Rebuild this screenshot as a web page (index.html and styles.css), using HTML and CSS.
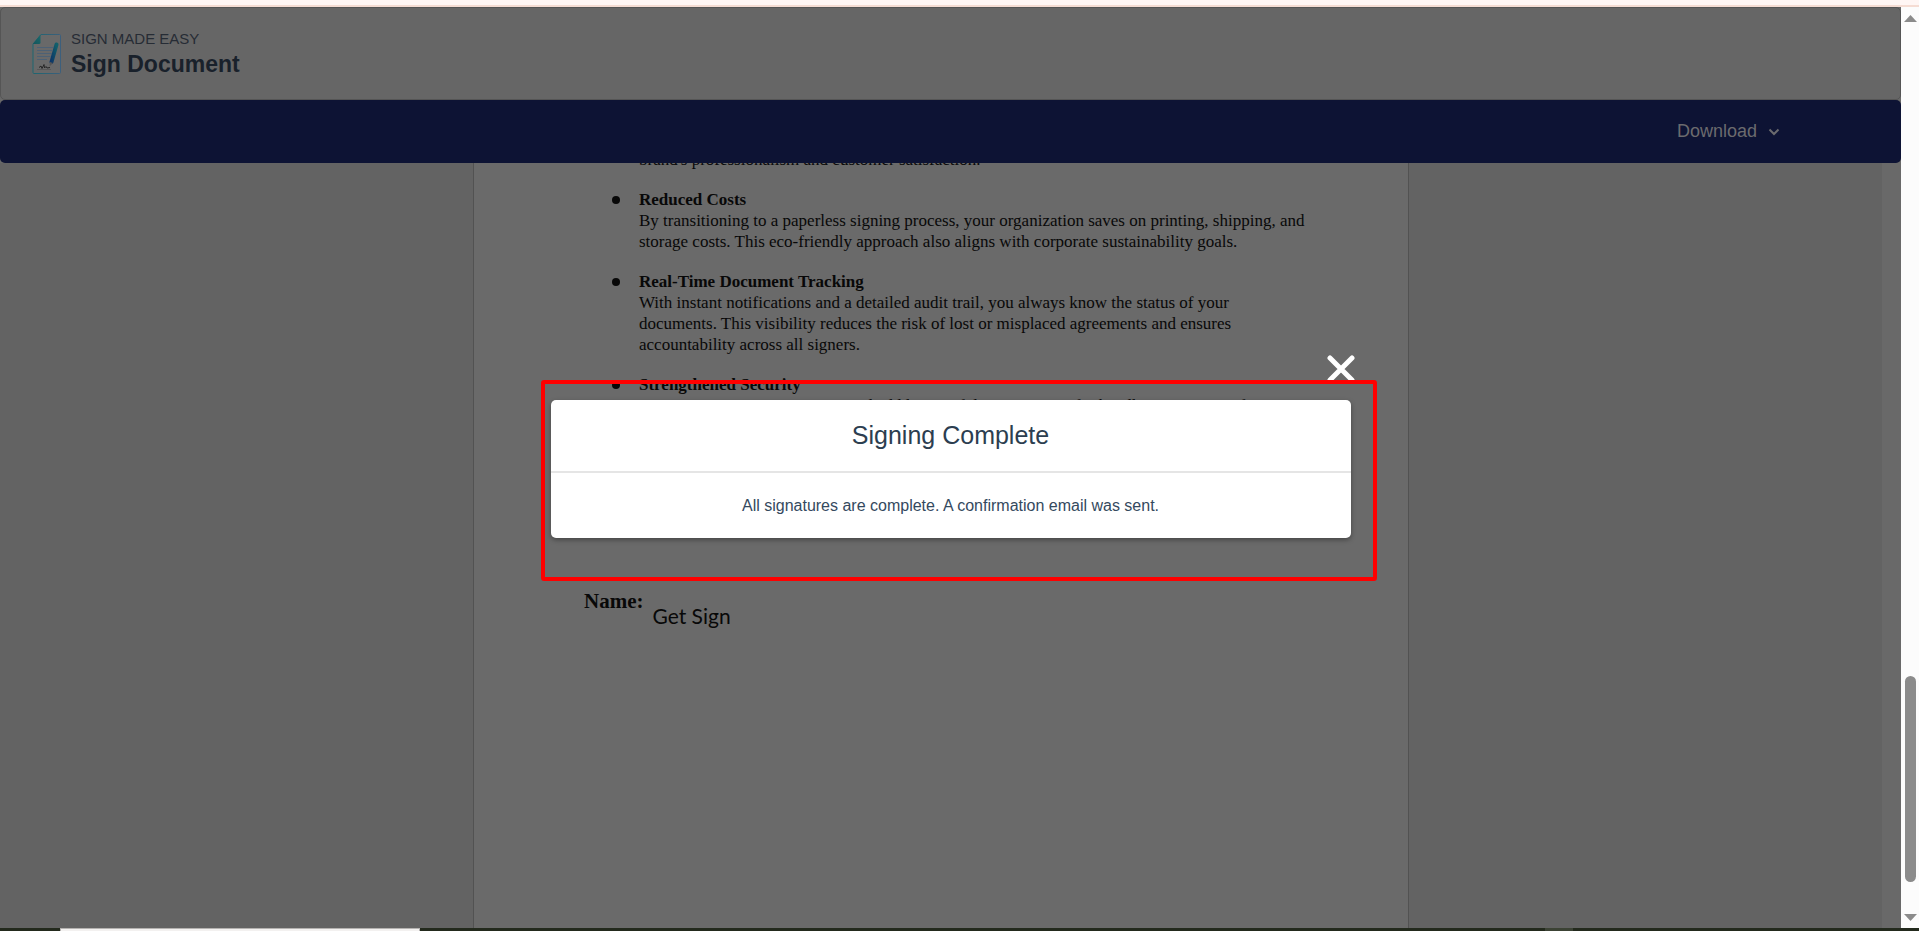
FILE: index.html
```html
<!DOCTYPE html>
<html lang="en">
<head>
<meta charset="utf-8">
<title>Sign Document</title>
<link rel="stylesheet" href="styles.css">
</head>
<body>
<div class="window-edge"></div>
<div class="viewport">
  <div class="app">
    <header class="header">
      <svg class="logo" viewBox="0 0 30 42" aria-hidden="true">
        <defs>
          <linearGradient id="edge"><stop offset="0" stop-color="#1d6670"/><stop offset="1" stop-color="#3c5f7c"/></linearGradient>
          <linearGradient id="fold" x1="0" y1="1" x2="1" y2="0"><stop offset="0" stop-color="#14555c"/><stop offset="1" stop-color="#1c6a6c"/></linearGradient>
          <linearGradient id="pen" x1="1" y1="0" x2="0" y2="1"><stop offset="0" stop-color="#12606b"/><stop offset="1" stop-color="#0d3768"/></linearGradient>
        </defs>
        <path d="M9 1.5H27.5Q28.5 1.500 28.500 2.500V39.500Q28.500 40.500 27.500 40.500H2Q1 40.500 1 39.500V11Z" fill="#696969" stroke="url(#edge)"/>
        <path d="M8.500 1.500V9.500Q8.500 11 7 11H.8Z" fill="url(#fold)"/>
        <path d="M5 14.500H21M5 17.500H20M5 20.500H19.500M5 23.500H18.500M5 26.500H15" stroke="#4d6175" stroke-width="1"/>
        <path d="M24.500 11.500L19.500 29" stroke="url(#pen)" stroke-width="4" stroke-linecap="round"/>
        <path d="M18 29L21 30L17.500 33.500Z" fill="#555"/>
        <path d="M7 34.500L9 33L10 35.500L12 31.500L12.500 35L14 33.500L15 35L18 34.500" fill="none" stroke="#252525"/>
        <path d="M5 36.500H19" stroke="#595959"/>
      </svg>
      <div class="heading">
        <p class="brand">SIGN MADE EASY</p>
        <h1 class="title">Sign Document</h1>
      </div>
    </header>
    <nav class="toolbar">
      <button class="download" type="button">Download
        <svg class="chevron" viewBox="0 0 12 8" aria-hidden="true"><path d="M1.500 1.500L6 6L10.500 1.500" fill="none" stroke="currentColor" stroke-width="2"/></svg>
      </button>
    </nav>
    <main class="canvas">
      <article class="paper">
        <ul class="benefits">
          <li class="benefit continued">brand's professionalism and customer satisfaction.</li>
          <li class="benefit"><h2 class="benefit-title">Reduced Costs</h2>By transitioning to a paperless signing process, your organization saves on printing, shipping, and<br>storage costs. This eco-friendly approach also aligns with corporate sustainability goals.</li>
          <li class="benefit"><h2 class="benefit-title">Real-Time Document Tracking</h2>With instant notifications and a detailed audit trail, you always know the status of your<br>documents. This visibility reduces the risk of lost or misplaced agreements and ensures<br>accountability across all signers.</li>
          <li class="benefit"><h2 class="benefit-title">Strengthened Security</h2>Encryption, secure signatures, and add layers of data protection for handling sensitive information.</li>
        </ul>
        <div class="signer">
          <span class="signer-label">Name:</span>
          <span class="signer-name">Get Sign</span>
        </div>
      </article>
    </main>
    <div class="overlay">
      <section class="modal" role="dialog" aria-labelledby="modal-title">
        <button class="close" type="button" aria-label="Close">
          <svg viewBox="0 0 28 28" aria-hidden="true"><path d="M3 3L25 25M25 3L3 25" stroke="currentColor" stroke-width="5" stroke-linecap="round"/></svg>
        </button>
        <h2 class="modal-title" id="modal-title">Signing Complete</h2>
        <p class="modal-text">All signatures are complete. A confirmation email was sent.</p>
        <div class="highlight"></div>
      </section>
    </div>
  </div>
  <div class="scrollbar" aria-hidden="true">
    <svg class="arrow" viewBox="0 0 13 7"><path d="M6.500 0L13 7H0Z" fill="currentColor"/></svg>
    <div class="track"><div class="thumb"></div></div>
    <svg class="arrow" viewBox="0 0 13 7"><path d="M0 0H13L6.500 7Z" fill="currentColor"/></svg>
  </div>
</div>
<div class="taskbar"><div class="taskbar-search"></div><div class="taskbar-item"></div></div>
</body>
</html>
```

FILE: styles.css
```css
* { box-sizing: border-box; }

body {
  margin: 0;
  height: 100vh;
  overflow: hidden;
  display: flex;
  flex-direction: column;
  background: #696969;
  font-family: "Liberation Sans", Arial, sans-serif;
}

h1, h2, p, ul { margin: 0; padding: 0; }
button { border: 0; padding: 0; background: none; font: inherit; }
svg { display: block; }

.window-edge {
  flex: none;
  height: 7px;
  background: #fff6f4;
  border-bottom: 2px solid #f5dcd3;
}

.viewport { flex: 1; min-height: 0; display: flex; }

.app {
  position: relative;
  flex: 1;
  min-width: 0;
  display: flex;
  flex-direction: column;
}

.header {
  flex: none;
  display: flex;
  align-items: center;
  gap: 9px;
  height: 93px;
  padding: 0 31px;
  background: #666;
  border: 1px solid #555;
  border-radius: 5px;
}
.logo { width: 30px; height: 42px; }
.heading { padding-bottom: 2px; }
.brand { font-size: 15px; line-height: 22px; color: #262c35; }
.title { font-size: 23px; line-height: 28px; color: #19212b; }

.toolbar {
  flex: none;
  display: flex;
  justify-content: flex-end;
  align-items: center;
  height: 63px;
  padding-right: 121px;
  background: #0d1334;
  border-radius: 5px;
}
.download {
  display: flex;
  align-items: center;
  gap: 11px;
  font-size: 18px;
  color: #6b6b6e;
}
.chevron { width: 12px; height: 8px; }

.canvas {
  flex: 1;
  min-height: 0;
  margin-right: 19px;
  overflow: hidden;
  display: flex;
  justify-content: center;
  background: #636363;
}
.paper {
  width: 936px;
  background: #6a6a6a;
  border: solid #525252;
  border-width: 0 1px;
  font-family: "Liberation Serif", "Times New Roman", serif;
  color: #080808;
}
.benefits {
  display: flex;
  flex-direction: column;
  gap: 19px;
  height: 421px;
  margin-top: -14px;
  padding-left: 165px;
  list-style: none;
  font-size: 17px;
  line-height: 21px;
  white-space: nowrap;
}
.benefit { position: relative; }
.benefit::before {
  content: "";
  position: absolute;
  left: -27px;
  top: 7px;
  width: 8px;
  height: 8px;
  border-radius: 50%;
  background: #080808;
}
.continued::before { display: none; }
.benefit-title { font-size: 17px; line-height: 21px; }
.signer {
  display: flex;
  gap: 9px;
  padding: 18px 0 0 110px;
}
.signer-label { font-size: 21px; line-height: 26px; font-weight: 700; }
.signer-name {
  padding-top: 15px;
  font-family: Lato, sans-serif;
  font-size: 21px;
  line-height: 26px;
}

.overlay {
  position: absolute;
  inset: 0;
  display: flex;
  justify-content: center;
  align-items: center;
}
.modal {
  position: relative;
  width: 800px;
  margin-bottom: -3px;
  background: #fff;
  border-radius: 5px;
  box-shadow: 0 2px 5px rgba(0, 0, 0, .35);
  text-align: center;
}
.modal-title {
  padding: 20px;
  border-bottom: 2px solid #e5e5e5;
  font-size: 25px;
  line-height: 31px;
  font-weight: 400;
  color: #2c3e50;
}
.modal-text {
  padding: 20px;
  font-size: 16px;
  line-height: 25px;
  color: #34495e;
}
.close {
  position: absolute;
  top: -45px;
  right: -4px;
  width: 28px;
  height: 28px;
  color: #fff;
}
.highlight {
  position: absolute;
  inset: -20px -26px -43px -10px;
  border: 4px solid #f00;
  border-radius: 3px;
}

.scrollbar {
  flex: none;
  width: 18px;
  display: flex;
  flex-direction: column;
  align-items: center;
  padding: 8px 0 7px;
  background: #fcfcfc;
  color: #8b8b8b;
}
.arrow { width: 13px; height: 7px; }
.track {
  flex: 1;
  display: flex;
  flex-direction: column;
  justify-content: flex-end;
  padding-bottom: 32px;
}
.thumb { width: 11px; height: 24%; border-radius: 6px; background: #8b8b8b; }

.taskbar {
  flex: none;
  display: flex;
  justify-content: space-between;
  height: 3px;
  padding: 0 346px 0 60px;
  background: #232a1d;
}
.taskbar-search { width: 360px; background: #f3f1f0; border: 1px solid #b5b3b1; border-bottom: 0; }
.taskbar-item { width: 28px; background: #3c4335; }
```
